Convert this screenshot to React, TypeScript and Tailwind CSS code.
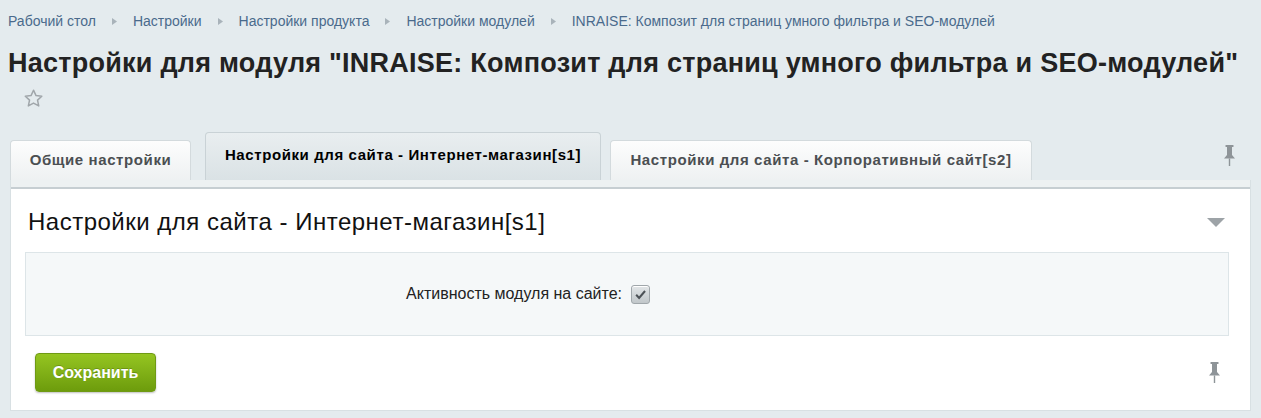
import { useState } from "react"

const crumbs = [
    "Рабочий стол",
    "Настройки",
    "Настройки продукта",
    "Настройки модулей",
    "INRAISE: Композит для страниц умного фильтра и SEO-модулей",
]

const tabs = [
    { id: "common", label: "Общие настройки", width: "w-[181px] mr-[14px]" },
    { id: "s1", label: "Настройки для сайта - Интернет-магазин[s1]", width: "w-[396px] mr-[9px]" },
    { id: "s2", label: "Настройки для сайта - Корпоративный сайт[s2]", width: "w-[422px]" },
]

function PinIcon({ className }: { className?: string }) {
    return (
        <svg viewBox="0 0 13 21" className={className} fill="#8e9498">
            <rect x="2.5" y="0" width="8" height="2" rx="0.5" />
            <rect x="4" y="2" width="5" height="8" />
            <path d="M4 10h5l3 3.5H1z" />
            <rect x="5.8" y="13.5" width="1.4" height="7.5" />
        </svg>
    )
}

export default function App() {
    const [tab, setTab] = useState("s1")
    const [active, setActive] = useState(true)

    return (
        <div className="min-h-[418px] bg-[#e4ebee] pl-2 pr-[10px] font-['Liberation_Sans',Arial,sans-serif]">
            <div className="flex h-[41px] items-center pt-[1px] text-[14px] text-[#4a6a8c]">
                {crumbs.map((c, i) => (
                    <div key={c} className="flex items-center">
                        {i > 0 && (
                            <svg viewBox="0 0 5 7" className="mx-[16px] h-[7px] w-[5px]">
                                <path d="M0 0l5 3.5L0 7z" fill="#a9b3ba" />
                            </svg>
                        )}
                        <a href="#" className="hover:underline">{c}</a>
                    </div>
                ))}
            </div>

            <h1 className="mt-[5px] whitespace-nowrap text-[27px] font-bold leading-[34px] tracking-[0.25px] text-[#222]">
                Настройки для модуля "INRAISE: Композит для страниц умного фильтра и SEO-модулей"
            </h1>
            <div className="flex h-[36px] items-center pl-[15px]">
                <svg viewBox="0 0 24 24" className="h-[21px] w-[21px]" fill="none" stroke="#a0a6aa" strokeWidth="1.7" strokeLinejoin="round">
                    <path d="M12 2.5l2.9 6.2 6.6.7-4.9 4.5 1.4 6.6L12 17.2l-5.9 3.3 1.4-6.6-4.9-4.5 6.6-.7z" />
                </svg>
            </div>

            <div className="mt-[16px] flex items-end pl-[2px]">
                {tabs.map((t) => {
                    const isActive = t.id === tab
                    return (
                        <button
                            key={t.id}
                            onClick={() => setTab(t.id)}
                            className={
                                t.width + " " +
                                (isActive
                                    ? "h-[48px] rounded-t-[4px] border border-b-0 border-[#c9d2d6] bg-gradient-to-b from-[#e9eef0] to-[#dae2e5] pb-[2px] text-[15px] font-bold tracking-[0.6px] text-[#000]"
                                    : "h-[40px] rounded-t-[4px] border border-b-0 border-[#d3dadd] bg-gradient-to-b from-[#fdfdfd] to-[#eef1f2] text-[15px] font-bold tracking-[0.6px] text-[#4b4f52]")
                            }
                        >
                            {t.label}
                        </button>
                    )
                })}
                <div className="flex-1" />
                <PinIcon className="mb-[14px] mr-[15px] h-[21px] w-[13px]" />
            </div>

            <div className="ml-[2px] border-x border-b border-[#d8e0e3] bg-white">
                <div className="h-[7px] bg-[#edf1f2]" />
                <div className="h-[2px] bg-[#c6ced2]" />
                <div className="flex items-center justify-between pl-[17px] pr-[25px] pt-[18px]">
                    <h2 className="text-[24px] leading-[30px] tracking-[0.5px] text-[#111]">
                        Настройки для сайта - Интернет-магазин[s1]
                    </h2>
                    <svg viewBox="0 0 18 9" className="h-[9px] w-[18px]">
                        <path d="M0 0h18L9 9z" fill="#9da3a7" />
                    </svg>
                </div>

                <div className="ml-[14px] mr-[21px] mt-[15px] flex h-[84px] items-center border border-[#dde5e8] bg-[#f5f8f9]">
                    <label className="w-[605px] pr-[9px] text-right text-[16px] text-[#222]">
                        Активность модуля на сайте:
                    </label>
                    <button
                        onClick={() => setActive(!active)}
                        className="flex h-[19px] w-[19px] items-center justify-center rounded-[3px] border border-[#a0a7ab] bg-gradient-to-b from-[#e2e6e8] to-[#c1c7ca] shadow-[inset_0_1px_0_#fff]"
                    >
                        {active && (
                            <svg viewBox="0 0 12 12" className="h-[13px] w-[13px]" fill="none" stroke="#4c5257" strokeWidth="1.9">
                                <path d="M2 6.3l2.7 2.8L10.2 2.8" />
                            </svg>
                        )}
                    </button>
                </div>

                <div className="flex items-center justify-between pb-[18px] pl-[24px] pr-[29px] pt-[17px]">
                    <button className="h-[39px] w-[121px] rounded-[4px] border border-[#6f9a14] bg-gradient-to-b from-[#95c521] to-[#6d9c0c] text-[16px] font-bold text-white shadow-[0_1px_2px_rgba(0,0,0,0.25)] [text-shadow:0_-1px_0_rgba(0,0,0,0.2)]">
                        Сохранить
                    </button>
                    <PinIcon className="h-[21px] w-[13px]" />
                </div>
            </div>
        </div>
    )
}
